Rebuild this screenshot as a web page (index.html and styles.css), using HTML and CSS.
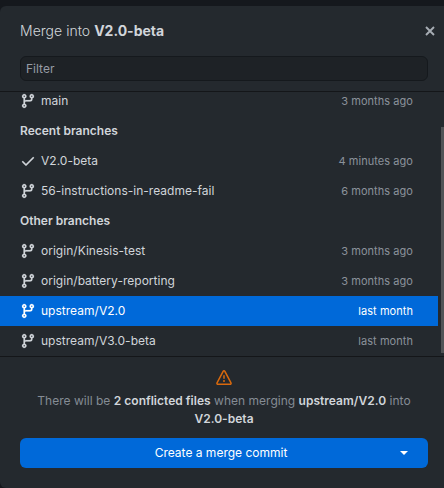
FILE: index.html
```html
<!DOCTYPE html>
<html lang="en">
<head>
<meta charset="utf-8">
<title>Merge into V2.0-beta</title>
<link rel="stylesheet" href="styles.css">
</head>
<body>
<svg class="symbols" aria-hidden="true">
  <symbol id="branch" viewBox="0 0 16 16"><path d="M9.5 3.25a2.25 2.25 0 1 1 3 2.122V6A2.5 2.5 0 0 1 10 8.5H6a1 1 0 0 0-1 1v1.128a2.251 2.251 0 1 1-1.5 0V5.372a2.25 2.25 0 1 1 1.5 0v1.836A2.493 2.493 0 0 1 6 7h4a1 1 0 0 0 1-1v-.628A2.25 2.25 0 0 1 9.5 3.25Zm-6 0a.75.75 0 1 0 1.5 0 .75.75 0 0 0-1.5 0Zm8.25-.75a.75.75 0 1 0 0 1.5.75.75 0 0 0 0-1.5ZM4.25 12a.75.75 0 1 0 0 1.5.75.75 0 0 0 0-1.5Z"/></symbol>
  <symbol id="check" viewBox="0 0 16 16"><path d="M13.78 4.22a.75.75 0 0 1 0 1.06l-7.25 7.25a.75.75 0 0 1-1.06 0L2.22 9.28a.75.75 0 0 1 1.06-1.06L6 10.94l6.72-6.72a.75.75 0 0 1 1.06 0Z"/></symbol>
</svg>
<main class="dialog">
  <header class="header">
    <h1 class="title">Merge into <strong>V2.0-beta</strong></h1>
    <svg class="close" viewBox="0 0 10 10"><path d="M1 1l8 8M9 1L1 9"/></svg>
  </header>
  <div class="filter">Filter</div>
  <section class="list">
    <ul class="rows">
      <li class="row"><svg class="icon"><use href="#branch"/></svg><span class="name">main</span><span class="date">3 months ago</span></li>
      <li class="row group">Recent branches</li>
      <li class="row"><svg class="icon"><use href="#check"/></svg><span class="name">V2.0-beta</span><span class="date">4 minutes ago</span></li>
      <li class="row"><svg class="icon"><use href="#branch"/></svg><span class="name">56-instructions-in-readme-fail</span><span class="date">6 months ago</span></li>
      <li class="row group">Other branches</li>
      <li class="row"><svg class="icon"><use href="#branch"/></svg><span class="name">origin/Kinesis-test</span><span class="date">3 months ago</span></li>
      <li class="row"><svg class="icon"><use href="#branch"/></svg><span class="name">origin/battery-reporting</span><span class="date">3 months ago</span></li>
      <li class="row selected"><svg class="icon"><use href="#branch"/></svg><span class="name">upstream/V2.0</span><span class="date">last month</span></li>
      <li class="row"><svg class="icon"><use href="#branch"/></svg><span class="name">upstream/V3.0-beta</span><span class="date">last month</span></li>
    </ul>
    <div class="thumb"></div>
  </section>
  <footer class="footer">
    <svg class="alert" viewBox="0 0 16 16"><path d="M6.457 1.047c.659-1.234 2.427-1.234 3.086 0l6.082 11.378A1.75 1.75 0 0 1 14.082 15H1.918a1.75 1.75 0 0 1-1.543-2.575Zm1.763.707a.25.25 0 0 0-.44 0L1.698 13.132a.25.25 0 0 0 .22.368h12.164a.25.25 0 0 0 .22-.368Zm.53 3.996v2.5a.75.75 0 0 1-1.5 0v-2.5a.75.75 0 0 1 1.5 0ZM9 11a1 1 0 1 1-2 0 1 1 0 0 1 2 0Z"/></svg>
    <p class="message">There will be <strong>2 conflicted files</strong> when merging <strong>upstream/V2.0</strong> into <strong>V2.0-beta</strong></p>
    <button class="merge"><span class="label">Create a merge commit</span><span class="caret"></span></button>
  </footer>
</main>
</body>
</html>
```
FILE: styles.css
```css
* { box-sizing: border-box; }
body {
  margin: 0;
  height: 488px;
  padding-top: 6px;
  overflow: hidden;
  background: #15181d;
  color: #d1d5da;
  font: 12px/18px Inter, sans-serif;
}
.symbols { display: none; }
.dialog {
  display: flex;
  flex-direction: column;
  height: 482px;
  background: #24292e;
  border-radius: 6px 0 0 6px;
}
.header {
  display: flex;
  align-items: center;
  justify-content: space-between;
  height: 50px;
  padding: 0 9px 0 20px;
}
.title { margin: 0; font-size: 14px; font-weight: 300; line-height: 20px; letter-spacing: .03px; }
.title strong { font-weight: 700; letter-spacing: 0; }
.close { width: 10px; height: 10px; fill: none; stroke: #a7adb4; stroke-width: 1.9; }
.filter {
  height: 25px;
  margin: 0 16px 10px 20px;
  padding: 0 5px;
  border: 1px solid #15191d;
  border-radius: 6px;
  background: #1e2226;
  color: #969ca5;
  line-height: 24px;
}
.list {
  display: flex;
  height: 266px;
  border-top: 1px solid #141619;
  border-bottom: 1px solid #141619;
  overflow: hidden;
}
.rows { flex: 1; margin: -6px 3px 0 0; padding: 0; list-style: none; }
.row { display: flex; align-items: center; height: 30px; padding: 0 25px 0 20px; }
.group { font-weight: 600; }
.icon {
  width: 16px;
  height: 16px;
  margin-right: 5px;
  fill: currentColor;
  stroke: currentColor;
  stroke-width: .2;
}
.name { flex: 1; letter-spacing: .02px; }
.date { color: #8b929b; font-size: 11px; letter-spacing: .05px; }
.selected, .selected .date { color: #fff; }
.selected { background: #0069d9; }
.thumb { width: 3px; height: 226px; margin-top: 35px; background: #505356; }
.footer {
  display: flex;
  flex-direction: column;
  align-items: center;
  padding: 13px 16px 0 20px;
}
.alert { width: 16px; height: 16px; fill: #d9690d; }
.message {
  width: 390px;
  margin: 6px 0 10px;
  text-align: center;
  color: #858c95;
  letter-spacing: .02px;
}
.message strong { color: #d1d5da; font-weight: 600; }
.merge {
  display: flex;
  align-items: center;
  width: 100%;
  height: 30px;
  padding: 0 20px 0 0;
  border: 0;
  border-radius: 6px;
  background: #0069d9;
  color: #fff;
  font: inherit;
}
.label { flex: 1; padding-left: 22px; text-align: center; }
.caret { border: 4px solid transparent; border-top-color: #fff; border-bottom: 0; }
```
